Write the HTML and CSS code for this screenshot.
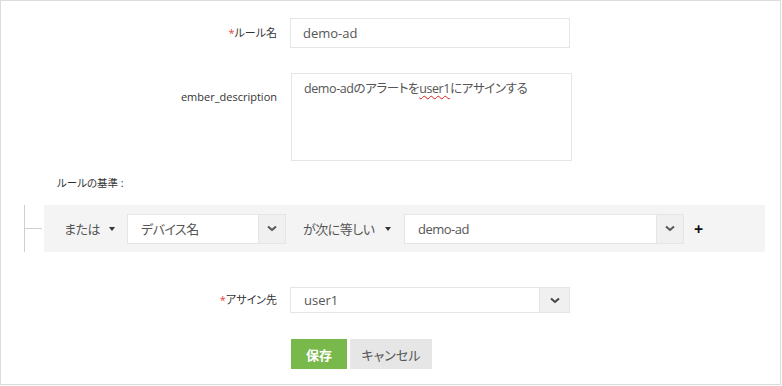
FILE: index.html
```html
<!DOCTYPE html>
<html lang="ja">
<head>
  <meta charset="UTF-8" />
  <title>ルールの編集</title>
  <link rel="stylesheet" href="styles.css">
</head>
<body>

  <div class="panel">
    <form class="rule-form">

      <div class="field-row">
        <label class="field-label"><span class="req">*</span>ルール名</label>
        <div class="text-input">demo-ad</div>
      </div>

      <div class="field-row field-row-top">
        <label class="field-label label-top">ember_description</label>
        <div class="text-area">demo-adのアラートを<span class="misspelt">user1</span>にアサインする</div>
      </div>

      <div class="criteria-title">ルールの基準 :</div>

      <div class="criteria">
        <div class="criteria-bracket"></div>
        <div class="criteria-bar">
          <div class="logic">または <span class="caret"></span></div>
          <div class="select select-field">
            <span class="select-text">デバイス名</span>
            <span class="select-btn">
              <svg width="10" height="7" viewBox="0 0 10 7"><polyline points="1,1.5 5,5 9,1.5" fill="none" stroke="#555" stroke-width="2"/></svg>
            </span>
          </div>
          <div class="op">が次に等しい <span class="caret"></span></div>
          <div class="select select-value">
            <span class="select-text">demo-ad</span>
            <span class="select-btn">
              <svg width="10" height="7" viewBox="0 0 10 7"><polyline points="1,1.5 5,5 9,1.5" fill="none" stroke="#555" stroke-width="2"/></svg>
            </span>
          </div>
          <span class="add">+</span>
        </div>
      </div>

      <div class="field-row assign-row">
        <label class="field-label"><span class="req">*</span>アサイン先</label>
        <div class="select select-assign">
          <span class="select-text">user1</span>
          <span class="select-btn">
            <svg width="10" height="7" viewBox="0 0 10 7"><polyline points="1,1.5 5,5 9,1.5" fill="none" stroke="#444" stroke-width="2"/></svg>
          </span>
        </div>
      </div>

      <div class="actions">
        <button type="button" class="btn btn-save">保存</button>
        <button type="button" class="btn btn-cancel">キャンセル</button>
      </div>

    </form>
  </div>

</body>
</html>
```

FILE: styles.css
```css
body {
  margin: 0;
  font-family: "Open Sans", "Noto Sans CJK JP", sans-serif;
  font-feature-settings: "palt";
  color: #333;
  background: #fff;
}

.panel {
  width: 781px;
  height: 385px;
  box-sizing: border-box;
  border: 1px solid #dcdcdc;
  padding-top: 17px;
}

/* label + field rows */
.field-row {
  display: grid;
  grid-template-columns: 276px 280px;
  column-gap: 13px;
  align-items: center;
}

.field-row-top {
  margin-top: 25px;
  align-items: start;
}

.field-label {
  text-align: right;
  font-size: 11px;
  line-height: 16px;
  color: #333;
}

.label-top {
  padding-top: 16px;
}

.req {
  color: #e0453a;
}

.text-input {
  height: 30px;
  box-sizing: border-box;
  border: 1px solid #e2e6e6;
  padding: 0 12px;
  font-size: 13px;
  line-height: 28px;
  color: #555;
}

.text-area {
  width: 281px;
  height: 88px;
  box-sizing: border-box;
  border: 1px solid #e2e6e6;
  padding: 6px 12px;
  margin-left: 1px;
  font-size: 12.5px;
  letter-spacing: -0.4px;
  line-height: 18px;
  color: #555;
}

.misspelt {
  text-decoration: underline wavy #e02020;
  text-decoration-thickness: 1px;
  text-underline-offset: 2px;
}

/* criteria */
.criteria-title {
  margin-top: 14px;
  padding-left: 56px;
  font-size: 10.5px;
  line-height: 16px;
  color: #333;
}

.criteria {
  display: flex;
  margin-top: 14px;
  padding-left: 23px;
}

.criteria-bracket {
  position: relative;
  width: 20px;
  height: 47px;
  border-left: 1px solid #cfcfcf;
  box-sizing: border-box;
}

.criteria-bracket::after {
  content: "";
  position: absolute;
  left: 0;
  top: 23px;
  width: 17px;
  border-top: 1px solid #cfcfcf;
}

.criteria-bar {
  width: 721px;
  height: 47px;
  background: #f4f4f4;
  display: flex;
  align-items: center;
  padding-left: 20px;
  box-sizing: border-box;
  font-size: 13px;
  letter-spacing: -0.5px;
  color: #555;
}

.logic {
  width: 63px;
  display: flex;
  align-items: center;
  gap: 9px;
}

.op {
  width: 101px;
  padding-left: 17px;
  display: flex;
  align-items: center;
  gap: 10px;
}

.caret {
  display: inline-block;
  width: 0;
  height: 0;
  border-top: 4px solid #333;
  border-left: 3.5px solid transparent;
  border-right: 3.5px solid transparent;
}

.select {
  display: flex;
  height: 30px;
  box-sizing: border-box;
  border: 1px solid #e4e6e6;
  background: #fff;
  font-size: 13px;
  color: #555;
}

.select-text {
  flex: 1;
  padding-left: 13px;
  line-height: 28px;
}

.select-btn {
  width: 26px;
  background: #f0f0f0;
  border-left: 1px solid #e4e6e6;
  display: flex;
  align-items: center;
  justify-content: center;
}

.select-field {
  width: 159px;
}

.select-value {
  width: 280px;
}

.add {
  margin-left: 10px;
  font-size: 16px;
  font-weight: 700;
  color: #111;
  line-height: 16px;
}

/* assign */
.assign-row {
  margin-top: 35px;
}

.select-assign {
  height: 26px;
}

.select-assign .select-text {
  line-height: 24px;
  letter-spacing: 0;
}

.select-assign .select-btn {
  width: 29px;
}

/* buttons */
.actions {
  margin-top: 26px;
  padding-left: 290px;
  display: flex;
  gap: 3px;
}

.btn {
  height: 30px;
  border: none;
  font-family: inherit;
  font-feature-settings: "palt";
  font-size: 13px;
  padding: 0;
  cursor: pointer;
}

.btn-save {
  width: 56px;
  background: #79b94b;
  color: #fff;
  font-weight: 700;
}

.btn-cancel {
  width: 82px;
  background: #e6e6e6;
  color: #555;
}
```
